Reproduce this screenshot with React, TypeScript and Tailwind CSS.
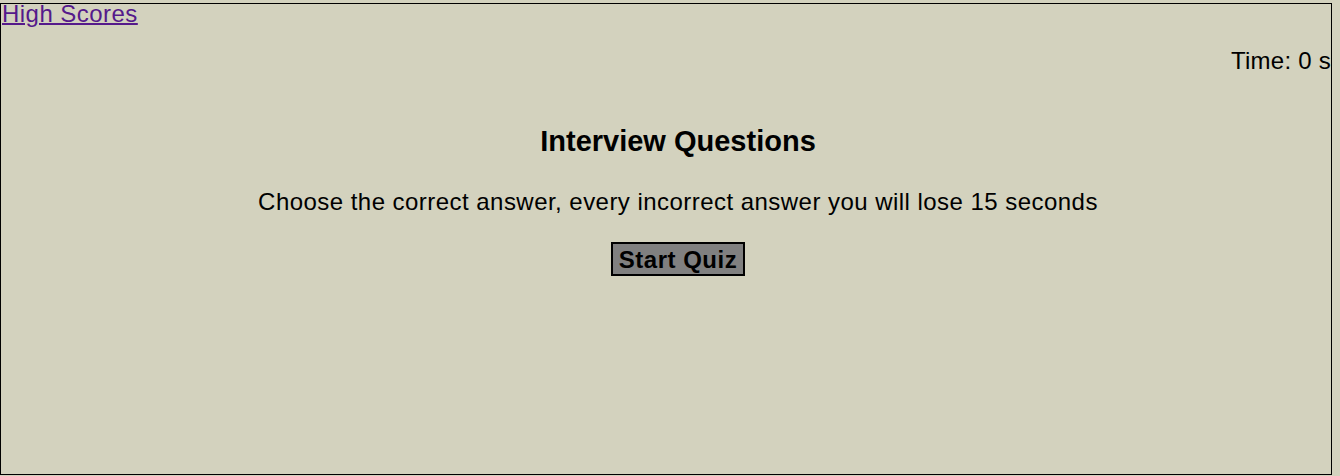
export default function App() {
  return (
    <div className="min-h-screen bg-[#d3d2be] pt-[3px] font-['Liberation_Sans',Arial,sans-serif] text-black">
      <div className="h-[472px] w-[1332px] border border-black">
        <a href="#" className="-mt-[4px] ml-[1px] block w-fit text-[24px] leading-[27px] tracking-[0.46px] text-[#551a8b] underline decoration-[2px]">
          High Scores
        </a>
        <p className="mt-[20px] text-right text-[24px] leading-[27px] tracking-[0.25px]">Time: 0 s</p>
        <div className="flex flex-col items-center pl-[24px]">
          <h1 className="mt-[51px] text-[29px] font-bold leading-[33px]">Interview Questions</h1>
          <p className="mt-[30px] text-[24px] leading-[27px] tracking-[0.46px]">
            Choose the correct answer, every incorrect answer you will lose 15 seconds
          </p>
          <button className="mt-[27px] border-2 border-black bg-[#808080] px-[6px] pt-[2px] pb-[1px] text-[24px] font-bold leading-[27px] tracking-[0.5px]">
            Start Quiz
          </button>
        </div>
      </div>
    </div>
  );
}
